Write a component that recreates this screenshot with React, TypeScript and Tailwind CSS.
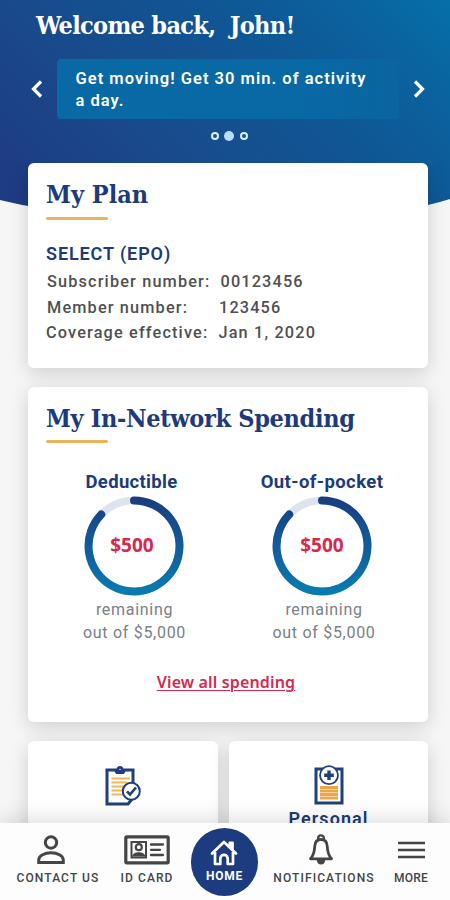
import type { ReactNode } from "react";

const slab = "font-['DejaVu_Serif_Condensed','DejaVu_Serif',serif] font-bold [font-stretch:condensed]";

const planRows = [
  { label: "Subscriber number:", value: "00123456", labelClass: "w-[174.5px] pl-px" },
  { label: "Member number:", value: "123456", labelClass: "w-[173px] pl-px" },
  { label: "Coverage effective:", value: "Jan 1, 2020", labelClass: "w-[172.5px]" },
];

const spending = [
  { title: "Deductible", amount: "$500", total: "$5,000", titleClass: "-ml-[5px] tracking-[0.3px]", amountClass: "-ml-1", noteClass: "ml-px" },
  { title: "Out-of-pocket", amount: "$500", total: "$5,000", titleClass: "tracking-[0.4px]", amountClass: "", noteClass: "ml-1" },
];

function Chevron({ d, className = "" }: { d: string; className?: string }) {
  return (
    <svg className={`h-5 w-4 shrink-0 ${className}`} viewBox="0 0 16 20" fill="none" stroke="white" strokeWidth="3.2">
      <path d={d} />
    </svg>
  );
}

function CardTitle({ children, className }: { children: ReactNode; className: string }) {
  return (
    <>
      <h2 className={`${slab} whitespace-nowrap text-[25px] leading-8 text-[#1d3a7c] ${className}`}>{children}</h2>
      <div className="h-[3px] w-[62px] rounded-sm bg-[#e9b45a]" />
    </>
  );
}

function Ring({ id, amount, amountClass }: { id: string; amount: string; amountClass: string }) {
  return (
    <div className="grid h-[100px] w-[100px] place-items-center">
      <svg className="col-start-1 row-start-1" width="100" height="100" viewBox="0 0 100 100" fill="none">
        <defs>
          <linearGradient id={id} gradientUnits="userSpaceOnUse" x1="50" y1="0" x2="50" y2="100">
            <stop offset="0" stopColor="#1b3b80" />
            <stop offset="1" stopColor="#087db3" />
          </linearGradient>
        </defs>
        <circle cx="50" cy="50" r="45.5" stroke="#dde4ef" strokeWidth="7.6" />
        <path d="M50 4.5A45.5 45.5 0 1 1 17.2 18.5" stroke={`url(#${id})`} strokeWidth="8" strokeLinecap="round" />
      </svg>
      <span className={`col-start-1 row-start-1 -mt-0.5 font-['Noto_Sans',sans-serif] text-[19px] font-bold leading-6 text-[#d9294b] ${amountClass}`}>
        {amount}
      </span>
    </div>
  );
}

function ClipboardCheck() {
  return (
    <svg width="36" height="40" viewBox="0 0 36 40" fill="none">
      <path d="M2 4H28V32L23 38H2Z" fill="white" stroke="#213f7c" strokeWidth="3" />
      <path d="M6.5 12.5H25M6.5 16.5H22M6.5 20.5H20M6.5 24.5H18M6.5 28.5H18" stroke="#f0b958" strokeWidth="2" />
      <path d="M8.5 3.5H11.5A3.5 3.5 0 0 1 18.5 3.5H21.5L19 8H11Z" fill="#213f7c" />
      <circle cx="15" cy="3.4" r="0.7" fill="white" />
      <circle cx="26.3" cy="25.3" r="8.5" fill="white" stroke="#213f7c" strokeWidth="2" />
      <path d="M22 25.3L25 28.5L31 21.5" stroke="#213f7c" strokeWidth="2.6" />
    </svg>
  );
}

function ClipboardPlus() {
  return (
    <svg width="30" height="40" viewBox="0 0 30 40" fill="none">
      <path d="M2 4H28V38H2Z" fill="white" stroke="#213f7c" strokeWidth="3" />
      <path d="M6 22.5H24M6 26H24M6 29.5H24M6 33H24" stroke="#eba64a" strokeWidth="2.8" />
      <circle cx="15" cy="10.2" r="9" fill="white" stroke="#213f7c" strokeWidth="1.8" />
      <path d="M15 5.4V15M10.2 10.2H19.8" stroke="#213f7c" strokeWidth="3.4" />
    </svg>
  );
}

function NavItem({ label, className, labelClass, children }: { label: string; className: string; labelClass: string; children: ReactNode }) {
  return (
    <div className={`flex h-full shrink-0 flex-col items-center pt-2.5 text-[#454545] ${className}`}>
      <div className="flex h-[33px] items-center">{children}</div>
      <span className={`mt-1 whitespace-nowrap text-xs font-medium leading-4 ${labelClass}`}>{label}</span>
    </div>
  );
}

export default function App() {
  return (
    <div className="flex h-[900px] w-[450px] flex-col overflow-hidden bg-[#f6f6f6] font-[Roboto,sans-serif]">
      <header className="h-[216px] shrink-0 bg-linear-[45deg,#1e3c82_8%,#194a8b_34%,#0f5795_66%,#0a639f_85%,#0570a8_100%] pt-2.5 [clip-path:path('M0_0H450V199Q428_206_410_208Q225_224_40_208Q20_205_0_200Z')]">
        <h1 className={`${slab} ml-9 whitespace-nowrap text-[25px] leading-8 tracking-[-0.67px] text-white`}>Welcome back,&nbsp; John!</h1>
        <div className="mt-[17px] flex items-center pl-[29px]">
          <Chevron d="M12 2.5L4.5 10L12 17.5" />
          <div className="ml-3 h-[60px] w-[342px] shrink-0 whitespace-nowrap rounded-sm bg-linear-to-r from-[#0869a5] from-70% to-[#0a649f] px-[18.5px] pt-[8.5px] text-[16.5px] font-semibold leading-[22px] tracking-[1.02px] text-white">
            Get moving! Get 30 min. of activity
            <br />a day.
          </div>
          <Chevron className="ml-3" d="M4 2.5L11.5 10L4 17.5" />
        </div>
        <div className="mt-3 flex h-2.5 items-center justify-center gap-[5.5px] pl-2">
          <i className="h-2 w-2 rounded-full border-2 border-[#d8edff]" />
          <i className="h-2.5 w-2.5 rounded-full bg-[#b9dcfb]" />
          <i className="h-2 w-2 rounded-full border-2 border-[#d8edff]" />
        </div>
      </header>

      <main className="relative -mt-[53px] flex h-[660px] shrink-0 flex-col gap-[19px] overflow-hidden pl-7 pr-[22px]">
        <section className="h-[205px] shrink-0 rounded-md bg-white pl-[18px] pt-4 shadow-[0_5px_20px_rgba(0,0,0,0.16)]">
          <CardTitle className="mb-1.5">My Plan</CardTitle>
          <h3 className="mt-[22px] text-[18px] font-semibold leading-6 tracking-[0.9px] text-[#1d3a7c]">SELECT (EPO)</h3>
          <div className="mt-[3px] text-[16.3px] font-medium leading-[25.5px] text-[#505050]">
            {planRows.map((row) => (
              <div key={row.label} className="flex whitespace-nowrap">
                <span className={`tracking-[1.15px] ${row.labelClass}`}>{row.label}</span>
                <span className="tracking-[1.15px]">{row.value}</span>
              </div>
            ))}
          </div>
        </section>

        <section className="h-[335px] shrink-0 rounded-md bg-white pl-[18px] pt-4 shadow-[0_5px_20px_rgba(0,0,0,0.16)]">
          <CardTitle className="mb-[5px] tracking-[-0.33px]">My In-Network Spending</CardTitle>
          <div className="-ml-[18px] mt-[26px] flex pl-[12px]">
            {spending.map((item) => (
              <div key={item.title} className="flex w-[188px] flex-col items-center">
                <h3 className={`text-[18.5px] font-bold leading-[27px] text-[#1d3a7c] ${item.titleClass}`}>{item.title}</h3>
                <Ring id={`ring-${item.title}`} amount={item.amount} amountClass={item.amountClass} />
                <p className={`mt-0.5 text-center text-[16px] leading-[23px] tracking-[0.7px] text-[#7b8089] ${item.noteClass}`}>
                  remaining
                  <br />
                  out of {item.total}
                </p>
              </div>
            ))}
          </div>
          <p className="mt-[26px] pr-[22px] text-center">
            <a className="font-['Noto_Sans',sans-serif] text-[16px] font-semibold leading-6 tracking-[0.15px] text-[#d3294f] underline decoration-1 underline-offset-2">View all spending</a>
          </p>
        </section>

        <div className="flex h-[130px] shrink-0 gap-[11px]">
          <section className="flex w-[190px] flex-col items-center rounded-md bg-white pt-[25px] shadow-[0_5px_20px_rgba(0,0,0,0.16)]">
            <ClipboardCheck />
          </section>
          <section className="flex w-[199px] flex-col items-center rounded-md bg-white pt-[24px] shadow-[0_5px_20px_rgba(0,0,0,0.16)]">
            <ClipboardPlus />
            <h3 className="mt-0.5 text-[18px] font-semibold leading-6 tracking-[1.1px] text-[#1d3a7c]">Personal</h3>
          </section>
        </div>
      </main>

      <nav className="relative flex h-[77px] shrink-0 bg-[#fdfdfd] pl-3 shadow-[0_-5px_20px_rgba(0,0,0,0.12)]">
        <NavItem label="CONTACT US" className="w-[92px]" labelClass="tracking-[1.1px]">
          <svg className="mr-[15px]" width="28" height="30" viewBox="0 0 28 30" fill="none" stroke="currentColor" strokeWidth="3">
            <circle cx="14" cy="7.5" r="5.7" />
            <path d="M1.7 27.5V25C1.7 20.5 8 17.8 14 17.8S26.3 20.5 26.3 25V27.5Z" />
          </svg>
        </NavItem>
        <NavItem label="ID CARD" className="-ml-px w-[88px]" labelClass="tracking-[1.1px]">
          <svg width="46" height="30" viewBox="0 0 46 30" fill="none" stroke="currentColor">
            <rect x="1.8" y="1.8" width="42.4" height="26" rx="1" strokeWidth="3.2" />
            <rect x="7.5" y="7" width="14.5" height="15.5" strokeWidth="2" />
            <circle cx="14.8" cy="12.2" r="3" strokeWidth="2.2" />
            <path d="M8 21.5C9 15.8 20.5 15.8 21.5 21.5Z" fill="currentColor" stroke="none" />
            <path d="M27 9.5H39M27 14.8H36M27 20H39" strokeWidth="2.3" strokeLinecap="round" />
          </svg>
        </NavItem>
        <div className="mt-[5px] flex h-[68px] w-[67px] shrink-0 flex-col items-center rounded-full bg-[#1d3c80] pt-3 text-white">
          <svg className="-ml-0.5" width="28" height="26" viewBox="0 0 28 26" fill="none" stroke="currentColor" strokeWidth="2.7" strokeLinecap="round" strokeLinejoin="round">
            <path d="M2 13.5L14 2L26 13.5M5 12V24H10.3V18.5A3.7 3.7 0 0 1 17.7 18.5V24H23V12M19.8 6.5V2.8H22.5V9.3" />
          </svg>
          <span className="mt-0.5 text-xs font-bold leading-4 tracking-[0.8px]">HOME</span>
        </div>
        <NavItem label="NOTIFICATIONS" className="ml-[13px] w-[106px]" labelClass="tracking-[1.1px]">
          <svg className="mr-1.5" width="26" height="32" viewBox="0 0 26 32" fill="none" stroke="currentColor" strokeWidth="2.8" strokeLinejoin="round">
            <path d="M10.2 5V4A2.8 2.6 0 0 1 15.8 4V5" strokeWidth="2.4" />
            <path d="M13 5.5C8.8 5.5 7 8.2 6.8 12C6.5 18 5.5 21.5 2.5 24.8H23.5C20.5 21.5 19.5 18 19.2 12C19 8.2 17.2 5.5 13 5.5Z" />
            <path d="M8.8 26C8.8 32 17.2 32 17.2 26Z" fill="currentColor" stroke="none" />
          </svg>
        </NavItem>
        <NavItem label="MORE" className="ml-[7px] w-[54px]" labelClass="tracking-[0.2px]">
          <svg width="27" height="20" viewBox="0 0 27 20" stroke="currentColor" strokeWidth="2.7">
            <path d="M0 3H27M0 10H27M0 17H27" />
          </svg>
        </NavItem>
      </nav>
    </div>
  );
}
